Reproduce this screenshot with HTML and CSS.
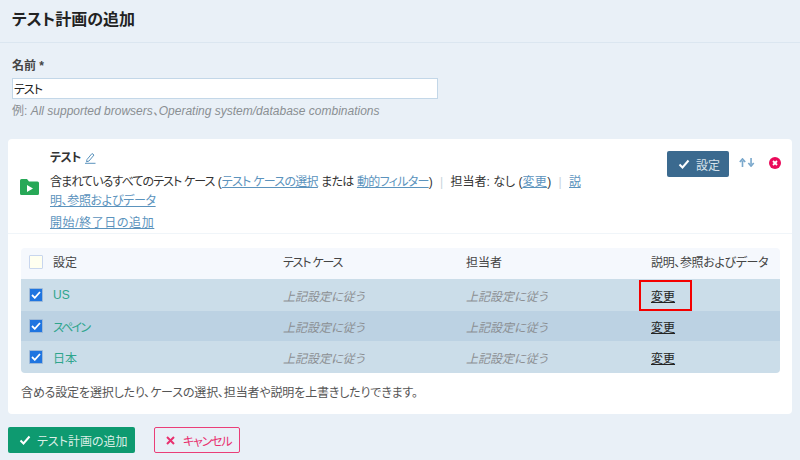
FILE: index.html
```html
<!DOCTYPE html>
<html lang="ja">
<head>
<meta charset="utf-8">
<title>テスト計画の追加</title>
<link rel="stylesheet" href="styles.css">
</head>
<body>
<header class="page-head"><h1>テスト計画の追加</h1></header>
<main class="content">
  <div class="field">
    <label class="field-label">名前 *</label>
    <input class="field-input" type="text" value="テスト">
    <p class="hint"><span class="hint-ex">例:</span> All supported browsers、Operating system/database combinations</p>
  </div>
  <section class="card">
    <div class="run">
      <svg class="run-icon" width="19" height="16" viewBox="0 0 19 16"><path d="M1.500 0H7l2 2.500h8.500a1.500 1.500 0 0 1 1.500 1.500V14.500a1.500 1.500 0 0 1-1.500 1.500h-16A1.500 1.500 0 0 1 0 14.500V1.500A1.500 1.500 0 0 1 1.500 0z" fill="#27a857"/><path d="M7 6l6 3.500-6 3.500z" fill="#fff"/></svg>
      <div class="run-body">
        <div class="run-name"><span class="tight">テスト</span>
          <svg class="pencil" width="11" height="12" viewBox="0 0 11 12"><path d="M2 7.500L7 1.500l2 1.500-5 6-2.500 .8z" fill="none" stroke="#5b93bd" stroke-width="1"/><path d="M0 11.300h10.500" stroke="#5b93bd" stroke-width="1"/></svg>
        </div>
        <p class="run-desc"><span class="kana-lead">含まれているすべてのテスト ケース</span> (<a class="kana">テスト ケースの選択</a> <span class="kana">または</span> <a class="kana">動的フィルター</a>) <span class="sep">|</span> 担当者: なし (<a class="wide">変更</a>) <span class="sep">|</span> <a class="head-long">説明、参照およびデータ</a></p>
        <p class="run-date"><a>開始/終了日の追加</a></p>
      </div>
      <div class="run-actions">
        <button class="btn btn-set"><svg width="12" height="10" viewBox="0 0 12 10"><path d="M1.500 5.500l3 3 6-7" fill="none" stroke="#fff" stroke-width="2"/></svg>設定</button>
        <svg class="arrows" width="18" height="9" viewBox="0 0 18 10"><path d="M4 10V3M1 4.500L4 1l3 3.500M13.500 0v7M10.500 5.500l3 3.500 3-3.500" fill="none" stroke="#7aa8cc" stroke-width="1.800"/></svg>
        <svg class="remove" width="12" height="12" viewBox="0 0 12 12"><circle cx="6" cy="6" r="6" fill="#ea0a5a"/><path d="M4 4l4 4M8 4l-4 4" stroke="#fff" stroke-width="1.800"/></svg>
      </div>
    </div>
    <div class="table-wrap">
      <table class="config-table">
        <thead>
          <tr>
            <th class="c-name"><span class="name-cell"><span class="box"></span>設定</span></th>
            <th class="c-case"><span class="kana-strong">テスト ケース</span></th>
            <th class="c-user">担当者</th>
            <th class="c-desc"><span class="head-long">説明、参照およびデータ</span></th>
          </tr>
        </thead>
        <tbody>
          <tr>
            <td><span class="name-cell"><span class="box checked"><svg width="10" height="8" viewBox="0 0 10 8"><path d="M1 4l2.800 2.800L9 1" fill="none" stroke="#fff" stroke-width="1.800"/></svg></span><span class="cfg">US</span></span></td>
            <td class="follow">上記設定に従う</td>
            <td class="follow">上記設定に従う</td>
            <td class="c-change"><a class="change">変更</a><span class="mark"></span></td>
          </tr>
          <tr class="alt">
            <td><span class="name-cell"><span class="box checked"><svg width="10" height="8" viewBox="0 0 10 8"><path d="M1 4l2.800 2.800L9 1" fill="none" stroke="#fff" stroke-width="1.800"/></svg></span><span class="cfg cfg-kana">スペイン</span></span></td>
            <td class="follow">上記設定に従う</td>
            <td class="follow">上記設定に従う</td>
            <td class="c-change"><a class="change">変更</a></td>
          </tr>
          <tr>
            <td><span class="name-cell"><span class="box checked"><svg width="10" height="8" viewBox="0 0 10 8"><path d="M1 4l2.800 2.800L9 1" fill="none" stroke="#fff" stroke-width="1.800"/></svg></span><span class="cfg">日本</span></span></td>
            <td class="follow">上記設定に従う</td>
            <td class="follow">上記設定に従う</td>
            <td class="c-change"><a class="change">変更</a></td>
          </tr>
        </tbody>
      </table>
      <p class="note">含める設定を選択したり、ケースの選択、担当者や説明を上書きしたりできます。</p>
    </div>
  </section>
  <div class="footer-actions">
    <button class="btn btn-add"><svg width="12" height="10" viewBox="0 0 12 10"><path d="M1.500 5.500l3 3 6-7" fill="none" stroke="#fff" stroke-width="2"/></svg>テスト計画の追加</button>
    <button class="btn btn-cancel"><svg width="9" height="9" viewBox="0 0 9 9"><path d="M1 1l7 7M8 1L1 8" fill="none" stroke="#e8316f" stroke-width="2"/></svg><span class="kana-strong">キャンセル</span></button>
  </div>
</main>
</body>
</html>
```
FILE: styles.css
```css
* { box-sizing: border-box; }
html, body { margin: 0; height: 100%; }
body {
  width: 800px;
  height: 460px;
  overflow: hidden;
  background: #e9f0f7;
  color: #333;
  font-family: "Liberation Sans", "Noto Sans CJK JP", sans-serif;
  font-size: 12px;
  font-feature-settings: "palt";
}
a { color: #5b93bd; text-decoration: underline; }
p { margin: 0; }
.tight { letter-spacing: -0.5px; }
.kana { letter-spacing: -0.7px; }
.kana-lead { letter-spacing: -0.9px; }
.kana-strong { letter-spacing: -1.2px; }
.head-long { letter-spacing: -0.35px; }
.wide { letter-spacing: 0.4px; }
.page-head {
  height: 43px;
  padding: 10px 12px 0;
  border-bottom: 1px solid #dbe6f0;
}
.page-head h1 {
  margin: 0;
  font-size: 16px;
  line-height: 20px;
  font-weight: 700;
  color: #222;
}
.content { padding: 0 8px; }
.field { padding: 15px 4px 0; height: 96px; }
.field-label { display: block; font-weight: 700; line-height: 16px; color: #444; margin-bottom: 4px; }
.field-input {
  display: block;
  width: 426px;
  height: 21px;
  padding: 0 1px;
  border: 1px solid #c3d7e8;
  background: #fff;
  font: inherit;
  font-feature-settings: "palt";
  letter-spacing: -1px;
  color: #222;
  outline: none;
}
.hint { margin-top: 4px; line-height: 16px; font-style: italic; color: #8a8f93; }
.hint-ex { font-style: normal; }
.card { background: #fff; border-radius: 4px; height: 275px; }
.run {
  display: flex;
  align-items: flex-start;
  height: 95px;
  padding: 10px 0 0 12px;
  border-bottom: 1px solid #f0f5f9;
}
.run-icon { margin-top: 30px; margin-right: 11px; flex: none; }
.run-body { width: 541px; flex: none; }
.run-name { font-weight: 700; color: #333; line-height: 18px; display: flex; align-items: center; gap: 4px; }
.run-desc { margin-top: 6px; line-height: 19px; color: #333; }
.run-date { margin-top: 3px; line-height: 18px; letter-spacing: 0.6px; }
.sep { color: #c8d3dc; margin: 0 4px; }
.run-actions { display: flex; align-items: flex-start; margin-left: 76px; flex: none; }
.btn {
  display: inline-flex;
  align-items: center;
  height: 26px;
  border-radius: 2px;
  border: 1px solid transparent;
  font: inherit;
  font-feature-settings: "palt";
  padding: 0;
  white-space: nowrap;
}
.btn-set { width: 62px; padding-left: 10px; gap: 6px; background: #3b6a8f; color: #d8e3ec; margin-top: 2px; }
.arrows { margin-left: 9px; margin-top: 9px; }
.remove { margin-left: 13px; margin-top: 8px; }
.table-wrap { padding: 14px 12px 0 13px; }
.config-table {
  width: 759px;
  border-collapse: separate;
  border-spacing: 0;
  table-layout: fixed;
}
.config-table th, .config-table td { padding: 0; text-align: left; font-weight: 400; white-space: nowrap; }
.config-table thead th { height: 31px; padding-bottom: 4px; background: #f5f8fd; color: #444; }
.config-table th:first-child { border-top-left-radius: 4px; }
.config-table th:last-child { border-top-right-radius: 4px; }
.config-table tbody td { height: 32px; background: #cbdde9; }
.config-table tbody tr.alt td { background: #bcd2e3; height: 30px; }
.config-table tbody tr:last-child td:first-child { border-bottom-left-radius: 4px; }
.config-table tbody tr:last-child td:last-child { border-bottom-right-radius: 4px; }
.c-name { width: 262px; }
.c-case { width: 183px; }
.c-user { width: 185px; }
.name-cell { display: flex; align-items: center; gap: 10px; padding-left: 8px; }
.box {
  display: inline-flex;
  align-items: center;
  justify-content: center;
  width: 14px;
  height: 14px;
  border: 1px solid #c8d6ee;
  background: #fffff0;
  border-radius: 1px;
}
.box.checked { background: #1f75e0; border-color: #9db9d8; }
.cfg { color: #2fa58c; }
.cfg-kana { letter-spacing: -1.8px; }
.follow { font-style: italic; color: #8b8f93; }
.c-change { position: relative; }
.change { color: #222; }
.mark {
  position: absolute;
  left: -12px;
  top: 1px;
  width: 53px;
  height: 31px;
  border: 2px solid #f40000;
}
.note { margin-top: 12px; line-height: 16px; color: #555; letter-spacing: -0.15px; }
.footer-actions { display: flex; gap: 19px; padding-top: 13px; }
.btn-add { width: 127px; padding-left: 10px; gap: 6px; background: #0e9a70; color: #dcefe7; }
.btn-cancel { width: 86px; padding-left: 11px; gap: 8px; background: transparent; border-color: #ea3e78; color: #e8316f; }
```
